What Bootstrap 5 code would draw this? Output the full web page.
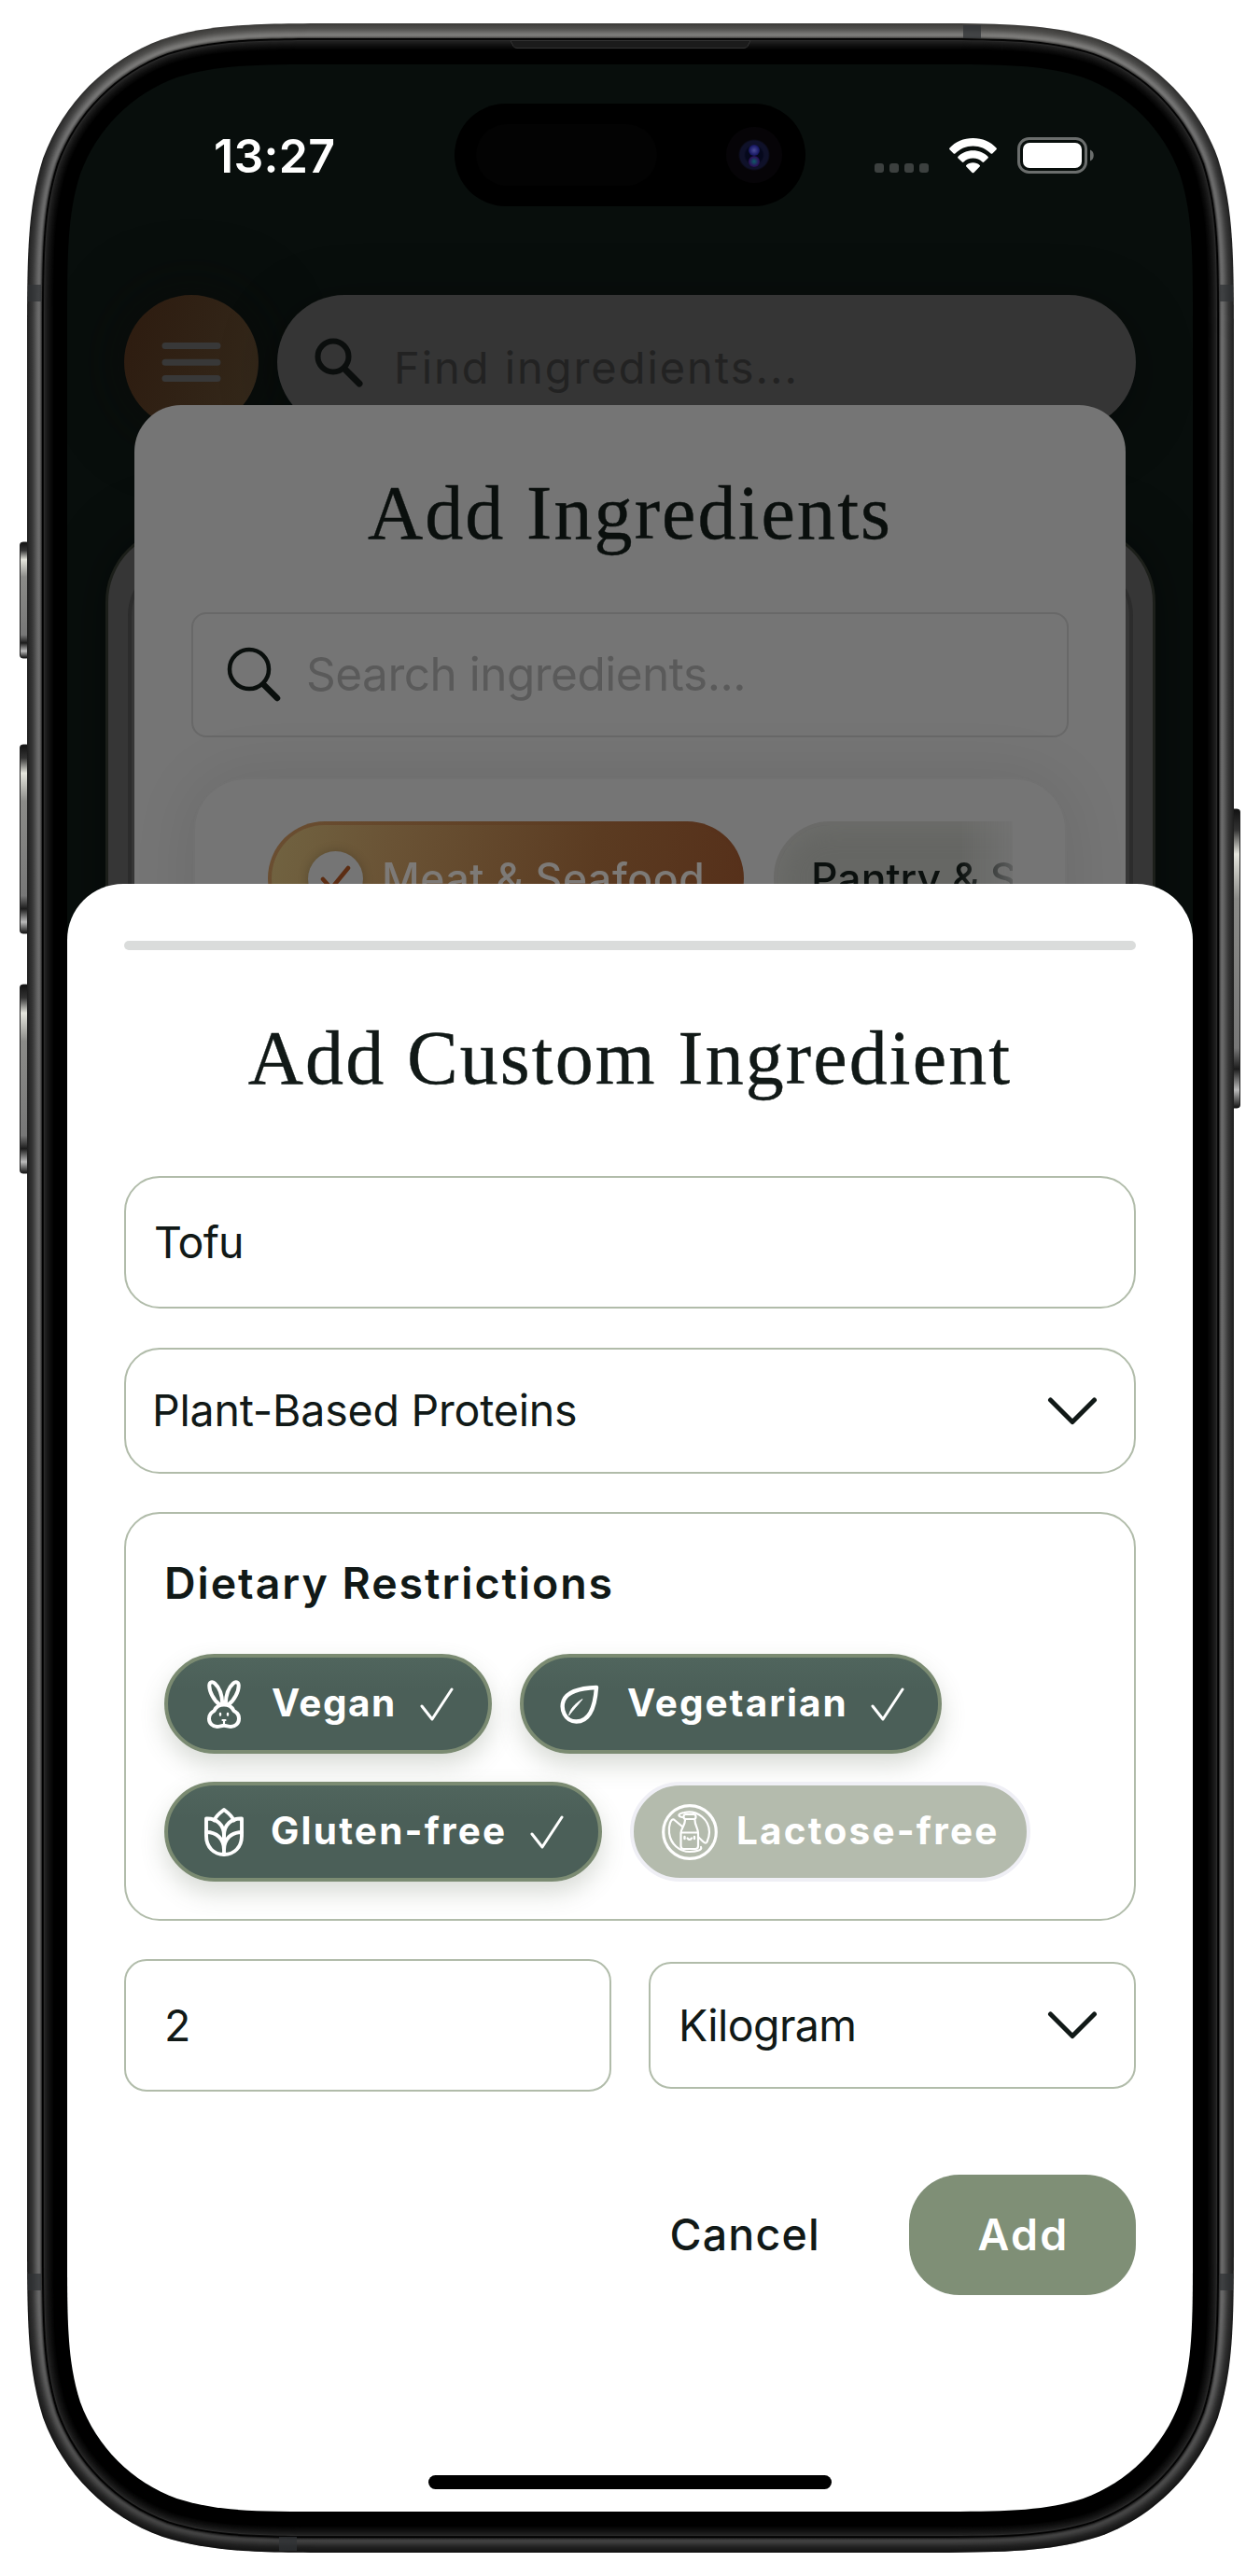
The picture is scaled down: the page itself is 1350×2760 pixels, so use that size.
<!DOCTYPE html>
<html lang="en">
<head>
<meta charset="utf-8">
<meta name="viewport" content="width=device-width, initial-scale=1">
<title>Add Custom Ingredient</title>
<link href="https://cdn.jsdelivr.net/npm/bootstrap@5.3.0/dist/css/bootstrap.min.css" rel="stylesheet">
<style>
  body{margin:0;background:#fff;font-family:Inter,"Liberation Sans",sans-serif;color:#111917;line-height:1}
  .device{width:1350px;height:2760px;overflow:hidden}
  .frame-art{left:0;top:0;z-index:0}
  .screen{left:72px;top:69px;width:1206px;height:2622px;background:#080e0c;z-index:1}
  .t{white-space:nowrap}
  .status{height:196px;padding:0 104px 0 157px;color:#fff}
  .clock{font-size:50px;font-weight:600;letter-spacing:.3px}
  .cells{gap:6px;padding-top:26px}
  .cell-dot{width:10px;height:10px;border-radius:3px;background:#3c403f}
  .wifi{margin:0 22px}
  .island{left:415px;top:42px;width:376px;height:110px;border-radius:55px;background:#000}
  .island-pill{left:23px;top:22px;width:194px;height:66px;border-radius:33px;background:#030303}
  .lens{left:291px;top:25px;width:60px;height:60px;border-radius:50%;background:radial-gradient(circle,#05081c 0 9px,#0f1129 11px 15px,#060407 17px)}
  .lens i{position:absolute;left:24px;top:19px;width:12px;height:12px;border-radius:50%;background:radial-gradient(#4a4c98,#1a1a66 60%,transparent)}
  .lens i+i{top:31px;background:radial-gradient(#0d5c66,#2a1259 60%,transparent)}
  .topbar{margin-top:51px;padding:0 61px;gap:20px}
  .menu-btn{width:144px;height:144px;background:linear-gradient(110deg,#2d1b0f,#34291b);box-shadow:0 0 60px 12px rgba(12,10,8,.5)}
  .find{height:144px;border-radius:72px;background:#353535;box-shadow:0 10px 60px rgba(0,0,0,.35);padding-left:40px;color:#222}
  .find .t{font-size:47px;margin-left:32px;padding-top:11px;letter-spacing:1.95px}
  .board{left:41px;top:496px;width:1125px;height:900px;border:3px solid #1c1f1a;border-radius:80px;background:#363636;box-shadow:0 0 60px rgba(0,0,0,.4)}
  .board-in{position:absolute;left:21px;right:21px;top:32px;bottom:0;border:4px solid #2c2c2c;border-radius:60px}
  .sheet-a{left:72px;top:365px;width:1062px;height:1000px;border-radius:50px 50px 0 0;background:#757575;padding:66px 61px 0;color:#0a0f0d}
  .fancy{font-family:"Liberation Serif",serif;font-size:82px;line-height:100px;font-weight:400;letter-spacing:2.1px;margin:0;-webkit-text-stroke:.4px currentColor}
  .sheet-a .lookup{margin-top:56px;height:134px;border:2px solid #686868;border-radius:16px;padding-left:36px;color:#5a5a5a;font-size:49.5px;letter-spacing:-.5px}
  .lookup .t{margin-left:26px}
  .cats{margin:43px 2px 0;height:300px;border-radius:56px;background:#757575;border:2px solid #717171;box-shadow:0 0 70px rgba(0,0,0,.09);padding:45px 56px 0 78px}
  .cats-clip{overflow:hidden;gap:32px;-webkit-mask-image:linear-gradient(90deg,#000 0 740px,transparent 815px)}
  .cat{height:122px;border-radius:61px;font-size:44.5px;font-weight:500;letter-spacing:.6px;flex:none}
  .cat-on{width:510px;border:4px solid transparent;background:linear-gradient(100deg,#716341,#6a5335 25%,#5b3b21 68%,#56301a) padding-box,linear-gradient(90deg,#6a4e31,#5d3d23 60%,#56301a) border-box;padding-left:39px;color:#7d7a77}
  .cat-on .dot{width:59px;height:59px;background:#757575;margin-right:20px;box-shadow:0 0 12px rgba(0,0,0,.2)}
  .cat-off{width:420px;border:4px solid #6a6a68;background:#666764;padding-left:36px;color:#0b100e;letter-spacing:0;box-shadow:inset 0 0 30px rgba(120,120,118,.5)}
  .sheet-b{left:0;top:878px;width:1206px;height:1744px;background:#fff;border-radius:60px 60px 0 0;padding:61px 61px 0}
  .grab{height:10px;border-radius:5px;background:#dadcdb}
  .sheet-b .fancy{margin:66px 0 76px}
  .box{border:2px solid #b1bcaa;border-radius:38px;font-size:46.5px}
  .box-name{height:142px;padding-left:30px;letter-spacing:-.8px}
  .box-kind{height:135px;margin-top:42px;padding:0 39px 0 28px;letter-spacing:-.2px}
  .box-diet{height:438px;margin-top:41px;padding:44px 0 0 41px}
  .diet-h{line-height:60px;font-size:46.5px;font-weight:600;letter-spacing:1.95px;margin:0 0 46px}
  .chips{gap:30px}
  .chip{height:107px;border-radius:54px;border:4px solid #7b8b72;background:linear-gradient(#50655d,#4b5f58 35%);color:#fff;font-size:40.5px;font-weight:700;letter-spacing:2.2px;box-shadow:0 12px 26px rgba(90,105,85,.24)}
  .chip-vegan{width:351px;padding-left:42px;letter-spacing:1.5px}
  .chip-veggie{width:452px;padding-left:39px;letter-spacing:2px}
  .chip-gluten{width:469px;padding-left:39px}
  .chip-off{width:429px;padding-left:30px;background:#b4bbad;border-color:#efeff5;box-shadow:none}
  .pair{margin-top:41px;gap:40px;height:142px}
  .pair>*{flex:0 0 522px}
  .box-qty{height:142px;padding-left:41px;border-radius:24px}
  .box-unit{height:136px;padding:0 39px 0 30px;border-radius:24px;letter-spacing:-.6px}
  .acts{margin-top:89px}
  .act-cancel{font-size:46.5px;font-weight:500;letter-spacing:1.2px;margin-right:95px}
  .act-add{width:243px;height:129px;border-radius:54px;background:#7f8f76;color:#fff;font-size:46.5px;font-weight:600;letter-spacing:2.2px;padding-left:2px}
  .home{left:387px;bottom:24px;width:432px;height:15px;border-radius:8px;background:#000}
  svg{display:block;flex:none}
</style>
</head>
<body>
<main class="device position-relative">
  <svg class="frame-art position-absolute" width="1350" height="2760" viewBox="0 0 1350 2760">
    <defs>
      <linearGradient id="key" x1="0" x2="0" y1="0" y2="1"><stop offset="0" stop-color="#111"/><stop offset=".07" stop-color="#333"/><stop offset=".15" stop-color="#e5e5dd"/><stop offset=".3" stop-color="#8b8b88"/><stop offset=".8" stop-color="#777"/><stop offset=".87" stop-color="#1c1c1c"/><stop offset=".94" stop-color="#bbb"/><stop offset="1" stop-color="#111"/></linearGradient>
      <linearGradient id="shine" x1="0" x2="0" y1="0" y2="1"><stop offset="0" stop-color="#fff8e8" stop-opacity=".14"/><stop offset=".06" stop-color="#fff" stop-opacity=".02"/><stop offset=".9" stop-color="#000" stop-opacity="0"/><stop offset="1" stop-color="#000" stop-opacity=".4"/></linearGradient>
    </defs>
    <g fill="url(#key)" stroke="#222" stroke-width="1">
      <rect x="21.500" y="581" width="10" height="124" rx="3"/><rect x="21.500" y="798" width="10" height="202" rx="3"/><rect x="21.500" y="1055" width="10" height="202" rx="3"/><rect x="1318" y="867" width="10.500" height="320" rx="3"/>
    </g>
    <g id="rings"></g>
    <g fill="#303336" fill-opacity=".75"><path d="M30 305h14v18H30zM1307 305h14v18h-14zM30 2436h14v18H30zM1307 2436h14v18h-14zM1032 27h19v14h-19zM299 2718h19v15h-19z"/></g>
    <path d="M547 43.500h257l-3 6q-1 2-4 2H554q-3 0-4-2z" fill="#1b1b1b" stroke="#333"/>
  </svg>

  <section class="screen position-absolute overflow-hidden" id="screen">
    <div class="status d-flex align-items-center justify-content-between">
      <span class="clock t">13:27</span>
      <span class="d-flex align-items-center">
        <span class="cells d-flex"><i class="cell-dot"></i><i class="cell-dot"></i><i class="cell-dot"></i><i class="cell-dot"></i></span>
        <svg class="wifi" width="51" height="38" viewBox="0 0 51 38" fill="#fff"><path d="M25.500 0C35.500 0 44.500 4 50.500 10.500q.8 1 0 1.800l-4.200 4.200q-.9.700-1.700 0C39.500 11.300 33 8.400 25.500 8.400S11.500 11.300 6.400 16.500q-.8.700-1.700 0L.5 12.300q-.8-.8 0-1.800C6.500 4 15.500 0 25.500 0z"/><path d="M25.500 13.200c6.400 0 12 2.500 16 6.500q.9.900 0 1.700l-4.300 4.200q-.8.700-1.700 0c-2.600-2.500-6-4-10-4s-7.400 1.500-10 4q-.9.700-1.700 0l-4.300-4.200q-.9-.8 0-1.700c4-4 9.600-6.500 16-6.500z"/><path d="M25.500 26.200c2.900 0 5.300 1 7.200 2.700q.8.800 0 1.600l-6.300 6.400q-.9.800-1.800 0l-6.300-6.400q-.8-.8 0-1.600c1.900-1.700 4.300-2.700 7.200-2.700z"/></svg>
        <svg width="84" height="40" viewBox="0 0 84 40"><rect x="1.500" y="1.500" width="72" height="36" rx="11" fill="none" stroke="#6b6e6d" stroke-width="3"/><rect x="6" y="6" width="63" height="27" rx="7" fill="#fff"/><path d="M78 13.500c5 1.500 5 10.500 0 12z" fill="#6b6e6d"/></svg>
      </span>
    </div>
    <div class="island position-absolute">
      <div class="island-pill position-absolute"></div>
      <div class="lens position-absolute"><i></i><i></i></div>
    </div>
    <div class="topbar d-flex">
      <div class="menu-btn rounded-circle d-flex align-items-center justify-content-center flex-shrink-0">
        <svg width="64" height="44" viewBox="0 0 64 44" stroke="#383838" stroke-width="7" stroke-linecap="round"><path d="M4 4.500h56M4 22.200h56M4 39.500h56"/></svg>
      </div>
      <div class="find d-flex align-items-center flex-grow-1">
        <svg width="53" height="53" viewBox="0 0 53 53" fill="none" stroke="#0b0e0d" stroke-linecap="round"><circle cx="20" cy="20" r="16.500" stroke-width="6"/><path d="M34 35l14 14" stroke-width="7"/></svg>
        <span class="t">Find ingredients...</span>
      </div>
    </div>

    <div class="board position-absolute"><div class="board-in"></div></div>

    <div class="sheet-a position-absolute">
      <h2 class="fancy text-center"><span class="t">Add Ingredients</span></h2>
      <div class="lookup d-flex align-items-center">
        <svg width="59" height="60" viewBox="0 0 59 60" fill="none" stroke="#0a0f0d" stroke-linecap="round"><circle cx="24" cy="24" r="21" stroke-width="4.500"/><path d="M40 41l14 14" stroke-width="6.500"/></svg>
        <span class="t">Search ingredients...</span>
      </div>
      <div class="cats">
        <div class="cats-clip d-flex">
          <div class="cat cat-on d-flex align-items-center">
            <span class="dot rounded-circle d-flex align-items-center justify-content-center"><svg width="34" height="28" viewBox="0 0 34 28" fill="none" stroke="#5c2d13" stroke-width="4.500" stroke-linecap="round" stroke-linejoin="round"><path d="M3 15l9 10L30 3"/></svg></span>
            <span class="t">Meat &amp; Seafood</span>
          </div>
          <div class="cat cat-off d-flex align-items-center"><span class="t">Pantry &amp; S</span></div>
        </div>
      </div>
    </div>

    <div class="sheet-b position-absolute">
      <div class="grab"></div>
      <h1 class="fancy text-center"><span class="t">Add Custom Ingredient</span></h1>
      <div class="box box-name d-flex align-items-center"><span class="t">Tofu</span></div>
      <div class="box box-kind d-flex align-items-center justify-content-between">
        <span class="t">Plant-Based Proteins</span>
        <svg width="54" height="32" viewBox="0 0 54 32" fill="none" stroke="#111917" stroke-width="5" stroke-linecap="round" stroke-linejoin="round"><path d="M3.500 4L27 27.500 50.500 4"/></svg>
      </div>
      <div class="box box-diet">
        <h3 class="diet-h"><span class="t">Dietary Restrictions</span></h3>
        <div class="chips d-flex flex-wrap">
          <div class="chip chip-vegan d-flex align-items-center">
            <svg width="36" height="52" viewBox="0 0 36 52" fill="none" stroke="#fff" stroke-width="4" stroke-linecap="round" stroke-linejoin="round"><path d="M13.500 26.500C7 22 2 12 2.300 5.500 2.500 2 5.500 1.200 8 3.500c5 4.500 8 12 8.300 22M22.500 26.500C29 22 34 12 33.700 5.500 33.500 2 30.500 1.200 28 3.500c-5 4.500-8 12-8.300 22"/><path d="M18 26.500c-6 0-9 3-10.500 6.500C4.500 34.500 2 37.500 2 41.500 2 46.500 6 50 10.500 50c3 0 5-1.200 7.500-1.200s4.500 1.200 7.500 1.200C30 50 34 46.500 34 41.500c0-4-2.500-7-5.500-8.500C27 29.500 24 26.500 18 26.500z"/><path d="M14 36v1.500M22 36v1.500" stroke-width="2.400"/><path d="M16.500 43h3M18 43v3.500" stroke-width="2.200"/></svg>
            <span class="t" style="margin-left:33px">Vegan</span>
            <svg style="margin-left:25px" width="36" height="36" viewBox="0 0 36 36" fill="none" stroke="#fff" stroke-width="3" stroke-linecap="round" stroke-linejoin="round"><path d="M2 20l11 14L34 2"/></svg>
          </div>
          <div class="chip chip-veggie d-flex align-items-center">
            <svg width="42" height="42" viewBox="0 0 42 42" fill="none" stroke="#fff" stroke-width="4.400" stroke-linejoin="round"><path d="M39 3C24 3.500 8 7 3.800 17 .5 26 5 39.500 17.500 39.500 32 39.500 37.500 24 39 3z"/><path d="M9.500 33C11 26 15.500 21 24 15.500 19 22 14 27 9.500 33z" fill="#fff" stroke-width=".8"/></svg>
            <span class="t" style="margin-left:30px">Vegetarian</span>
            <svg style="margin-left:24px" width="36" height="36" viewBox="0 0 36 36" fill="none" stroke="#fff" stroke-width="3" stroke-linecap="round" stroke-linejoin="round"><path d="M2 20l11 14L34 2"/></svg>
          </div>
          <div class="chip chip-gluten d-flex align-items-center">
            <svg width="42" height="52" viewBox="0 0 42 52" fill="none" stroke="#fff" stroke-width="3.900" stroke-linecap="round" stroke-linejoin="round"><path d="M10.500 13.500C12.500 8 17 5 21 2c4 3 8.500 6 10.500 11.500"/><path d="M2 11.500C13 11 21 18 21 29.500 21 18 29 11 40 11.500V30C40 42 32 50 21 50S2 42 2 30z"/><path d="M2 26c11 0 19 7 19 19 0-12 8-19 19-19M21 24v26"/></svg>
            <span class="t" style="margin-left:29px">Gluten-free</span>
            <svg style="margin-left:25px" width="36" height="36" viewBox="0 0 36 36" fill="none" stroke="#fff" stroke-width="3" stroke-linecap="round" stroke-linejoin="round"><path d="M2 20l11 14L34 2"/></svg>
          </div>
          <div class="chip chip-off d-flex align-items-center">
            <svg width="60" height="60" viewBox="0 0 60 60" fill="none" stroke="#fff" stroke-width="2.200" stroke-linecap="round" stroke-linejoin="round"><circle cx="30" cy="30" r="28.300" stroke-width="3.200"/><path d="M22 14c-6-1-4-4 2-5C39 6 51 17 51 30c0 4-1 7-2.500 10.500-2 3-4-.5-9.500-5.500M22 24L13 16.500C10 15 7 23 8 31c1.500 12 11 20 22 20 6 0 14-1.500 12-5"/><rect x="23.500" y="11" width="13" height="5" rx="2.300"/><path d="M25 17c0 6-4.500 9-4.500 14v14q0 3 3 3H36q3 0 3-3V31c0-5-3.500-8-3.500-14M20.500 30.500H39"/><path d="M24.500 35v2M35 35v2" stroke-width="2.400"/><path d="M27.500 36.500q2.300 3 4.600 0" stroke-width="2.200"/></svg>
            <span class="t" style="margin-left:20px">Lactose-free</span>
          </div>
        </div>
      </div>
      <div class="pair d-flex align-items-center">
        <div class="box box-qty d-flex align-items-center"><span class="t">2</span></div>
        <div class="box box-unit d-flex align-items-center justify-content-between">
          <span class="t">Kilogram</span>
          <svg width="54" height="32" viewBox="0 0 54 32" fill="none" stroke="#111917" stroke-width="5" stroke-linecap="round" stroke-linejoin="round"><path d="M3.500 4L27 27.500 50.500 4"/></svg>
        </div>
      </div>
      <div class="acts d-flex align-items-center justify-content-end">
        <span class="act-cancel t">Cancel</span>
        <span class="act-add d-flex align-items-center justify-content-center"><span class="t">Add</span></span>
      </div>
    </div>
    <div class="home position-absolute"></div>
  </section>
</main>
<script src="https://cdn.jsdelivr.net/npm/bootstrap@5.3.0/dist/js/bootstrap.bundle.min.js"></script>
<script>
  // Rounded rectangle whose corners ease into the straight edges.
  function squircle(x, y, w, h, r) {
    const R = x + w, B = y + h;
    const k = [1.52866, 1.08849, .86841, .63149, .07491, .37282, .16906].map(v => v * r);
    const corner = (f) => 'C' + [f(k[1], 0), f(k[2], 0), f(k[3], k[4])].join(' ') +
      'C' + [f(k[5], k[6]), f(k[6], k[5]), f(k[4], k[3])].join(' ') +
      'C' + [f(0, k[2]), f(0, k[1]), f(0, k[0])].join(' ');
    return 'M' + (x + k[0]) + ' ' + y + 'H' + (R - k[0]) + corner((a, b) => (R - a) + ' ' + (y + b)) +
      'V' + (B - k[0]) + corner((a, b) => (R - b) + ' ' + (B - a)) +
      'H' + (x + k[0]) + corner((a, b) => (x + a) + ' ' + (B - b)) +
      'V' + (y + k[0]) + corner((a, b) => (x + b) + ' ' + (y + a)) + 'Z';
  }
  const metal = ['#1d1d1d','#222','#272727','#2b2b2b','#2f2f2f','#343434','#3b3b3b','#434343','#4c4c4c','#555','#5e5e5e','#656565','#696969','#646464','#4f4f4f','#2f2f2f'];
  const glass = ['#000','#080808','#2a2a2a','#202020','#1c1c1c','#181818','#141414','#111','#0d0d0d','#0a0a0a','#070707','#040404','#000'];
  let art = '';
  const ring = (i, fill) => art += '<path d="' + squircle(29 + i, 25 + i, 1293 - 2 * i, 2710 - 2 * i, 229 - i) + '" fill="' + fill + '"/>';
  metal.forEach((c, i) => ring(i, c));
  ring(0, 'url(#shine)');
  glass.forEach((c, i) => ring(16 + i, c));
  document.getElementById('rings').innerHTML = art;
  document.getElementById('screen').style.clipPath = 'path("' + squircle(0, 0, 1206, 2622, 186) + '")';
</script>
</body>
</html>
